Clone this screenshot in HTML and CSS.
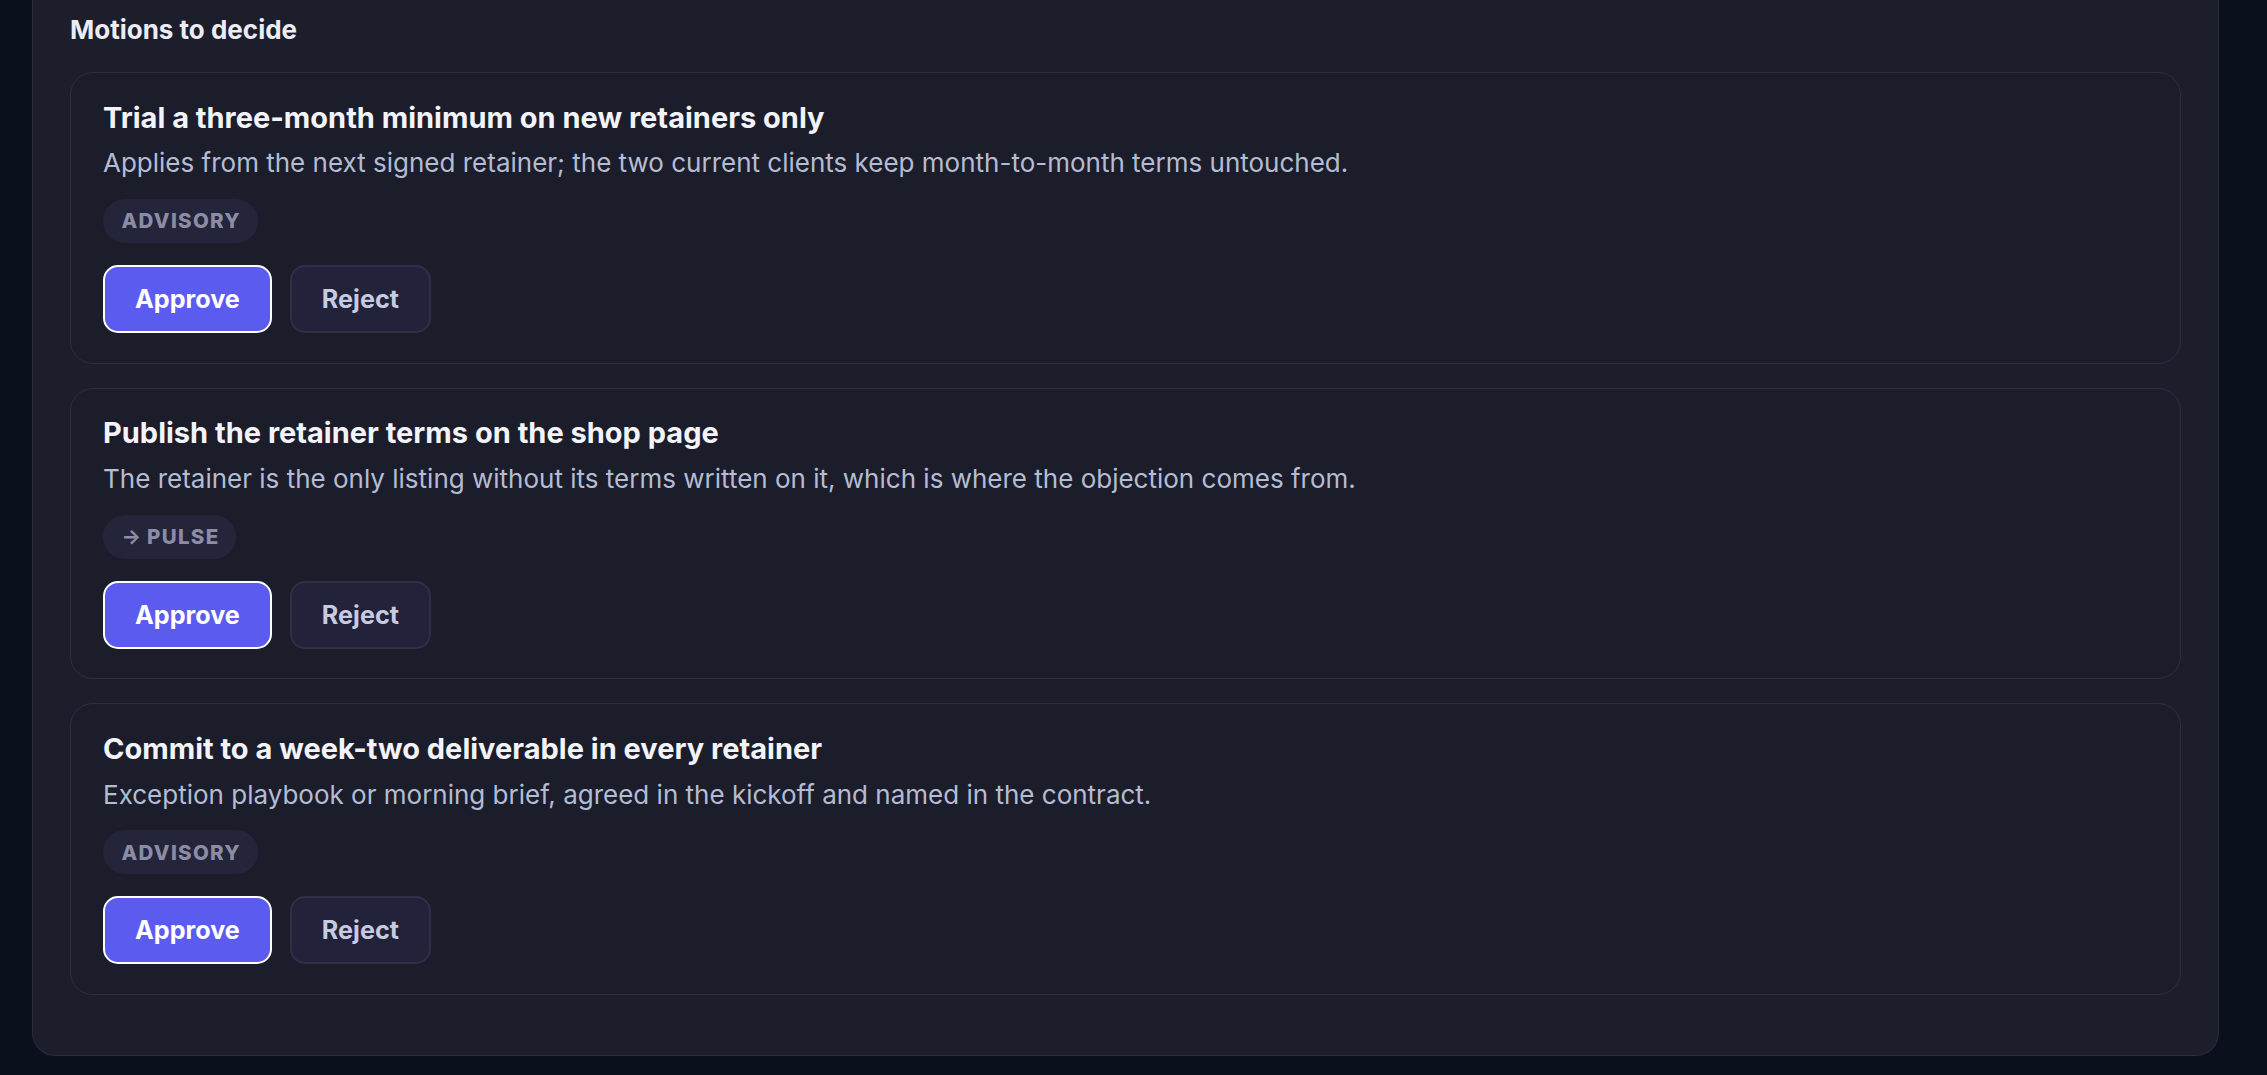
FILE: index.html
```html
<!DOCTYPE html>
<html lang="en">
<head>
  <meta charset="UTF-8" />
  <meta name="viewport" content="width=device-width, initial-scale=1.0"/>
  <title>Motions to decide</title>
  <link rel="stylesheet" href="styles.css">
</head>
<body>

  <!-- Motions panel -->
  <div class="panel">
    <h2 class="panel-title">Motions to decide</h2>

    <div class="motions">
      <div class="motion">
        <h3>Trial a three-month minimum on new retainers only</h3>
        <p>Applies from the next signed retainer; the two current clients keep month-to-month terms untouched.</p>
        <span class="tag">Advisory</span>
        <div class="actions">
          <button class="btn approve">Approve</button>
          <button class="btn reject">Reject</button>
        </div>
      </div>

      <div class="motion">
        <h3>Publish the retainer terms on the shop page</h3>
        <p>The retainer is the only listing without its terms written on it, which is where the objection comes from.</p>
        <span class="tag"><span class="arrow">&#x2192;</span> Pulse</span>
        <div class="actions">
          <button class="btn approve">Approve</button>
          <button class="btn reject">Reject</button>
        </div>
      </div>

      <div class="motion">
        <h3>Commit to a week-two deliverable in every retainer</h3>
        <p>Exception playbook or morning brief, agreed in the kickoff and named in the contract.</p>
        <span class="tag">Advisory</span>
        <div class="actions">
          <button class="btn approve">Approve</button>
          <button class="btn reject">Reject</button>
        </div>
      </div>
    </div>
  </div>

</body>
</html>
```

FILE: styles.css
```css
* { box-sizing: border-box; }
body {
  margin: 0;
  background-color: #0b101d;
  color: #fff;
  font-family: Inter, 'Noto Sans', sans-serif;
  padding: 0 48px 20px 32px;
}

.panel {
  background-color: #1d1e2c;
  border: 1px solid #2b2c40;
  border-top: none;
  border-radius: 0 0 23px 23px;
  padding: 13.5px 37px 59.5px 37px;
}

.panel-title {
  margin: 0 0 26.5px;
  font-size: 26px;
  line-height: 32px;
  font-weight: 700;
  color: #ececf5;
}

.motions {
  display: flex;
  flex-direction: column;
  gap: 24px;
}

.motion {
  background-color: #1c1d2b;
  border: 1px solid #2d2e46;
  border-radius: 23px;
  padding: 26.5px 32px 29.7px;
  display: flex;
  flex-direction: column;
  align-items: flex-start;
}

.motion h3 {
  margin: 0;
  font-size: 29px;
  line-height: 36px;
  font-weight: 700;
  color: #f3f3fa;
}

.motion p {
  margin: 9.7px 0 0;
  font-size: 26px;
  line-height: 36px;
  color: #b4bcd3;
}

.tag {
  margin-top: 17.8px;
  height: 44px;
  display: inline-flex;
  align-items: center;
  gap: 6px;
  padding: 0 17px 0 18.5px;
  border-radius: 22px;
  background-color: #24253a;
  color: #8c8ca6;
  font-size: 20.5px;
  font-weight: 800;
  letter-spacing: 1.3px;
  text-transform: uppercase;
}

.tag .arrow {
  letter-spacing: 0;
  font-weight: 700;
}

.actions {
  display: flex;
  gap: 18px;
  margin-top: 22px;
}

.btn {
  height: 68px;
  padding: 0 30px;
  border-radius: 15px;
  font-family: inherit;
  font-size: 25.2px;
  font-weight: 700;
  cursor: pointer;
}

.approve {
  background-color: #5b5bef;
  border: 2px solid #fff;
  color: #fff;
}

.reject {
  background-color: #22233a;
  border: 2px solid #2e2f48;
  color: #c8cae0;
}
```
